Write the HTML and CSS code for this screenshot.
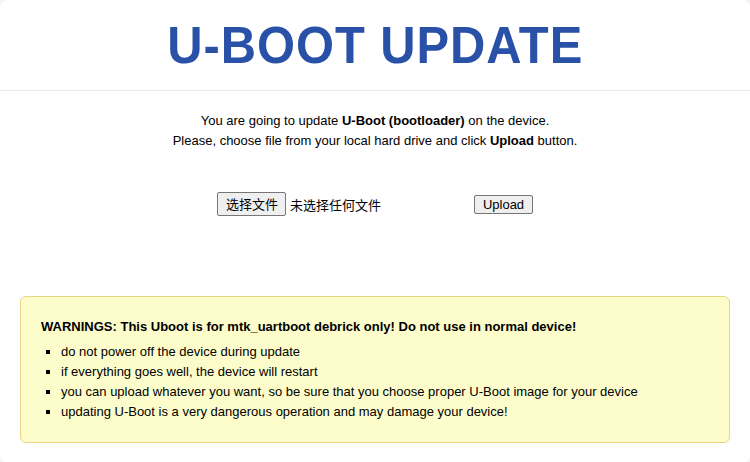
FILE: index.html
```html
<!DOCTYPE html>
<html lang="en">
<head>
  <meta charset="UTF-8">
  <meta name="viewport" content="width=device-width, initial-scale=1.0">
  <title>U-Boot update</title>
  <link rel="stylesheet" href="styles.css">
</head>
<body>
  <div class="page">
    <div class="header">
      <h1>U-BOOT UPDATE</h1>
    </div>

    <div class="content">
      <p class="intro">
        You are going to update <strong>U-Boot (bootloader)</strong> on the device.<br>
        Please, choose file from your local hard drive and click <strong>Upload</strong> button.
      </p>

      <form class="upload-form" onsubmit="return false;">
        <label class="file-field">
          <input type="file" name="firmware" id="file">
          <span class="file-btn">选择文件</span>
          <span class="file-name" id="file-name">未选择任何文件</span>
        </label>
        <button type="submit" class="upload-btn">Upload</button>
      </form>

      <div class="warning">
        <p class="warning-title">WARNINGS: This Uboot is for mtk_uartboot debrick only! Do not use in normal device!</p>
        <ul>
          <li>do not power off the device during update</li>
          <li>if everything goes well, the device will restart</li>
          <li>you can upload whatever you want, so be sure that you choose proper U-Boot image for your device</li>
          <li>updating U-Boot is a very dangerous operation and may damage your device!</li>
        </ul>
      </div>
    </div>
  </div>

  <script>
    document.getElementById('file').onchange = function() {
      const name = this.files.length ? this.files[0].name : '未选择任何文件';
      document.getElementById('file-name').textContent = name;
    };
  </script>
</body>
</html>
```

FILE: styles.css
```css
/* Base */
body {
  margin: 0;
  background: #f4f4f4;
  font-family: 'Liberation Sans', Arial, 'Noto Sans CJK SC', sans-serif;
  font-size: 13px;
  color: #000;
}

.page {
  background: #fff;
  border-radius: 8px;
  min-height: 462px;
  box-sizing: border-box;
}

/* Header */
.header {
  height: 90px;
  border-bottom: 1px solid #e8e8e8;
  display: flex;
  align-items: center;
  justify-content: center;
}

h1 {
  margin: 0;
  font-family: 'Liberation Sans', Arial, sans-serif;
  font-size: 52px;
  font-weight: bold;
  color: #2951a7;
  letter-spacing: 1px;
  transform: scaleX(0.94);
}

/* Content */
.content {
  padding: 20px 20px 20px;
}

.intro {
  margin: 0;
  text-align: center;
  line-height: 20px;
}

.upload-form {
  display: flex;
  justify-content: center;
  align-items: center;
  margin-top: 41px;
}

.file-field {
  position: relative;
  display: inline-flex;
  align-items: center;
  width: 253px;
  font-family: 'Noto Sans CJK SC', sans-serif;
}

.file-field input {
  position: absolute;
  width: 1px;
  height: 1px;
  opacity: 0;
}

.file-btn {
  display: inline-block;
  height: 24px;
  line-height: 22px;
  box-sizing: border-box;
  padding: 0 7px 0 8px;
  background: #efefef;
  border: 1px solid #767676;
  border-radius: 2px;
  margin-right: 4px;
  cursor: pointer;
}

.file-name {
  white-space: nowrap;
}

.upload-btn {
  margin-left: 4px;
  height: 19px;
  padding: 0 8px;
  font-family: 'Liberation Sans', Arial, sans-serif;
  font-size: 13px;
  background: #efefef;
  border: 1px solid #767676;
  border-radius: 2px;
  cursor: pointer;
}

/* Warning box */
.warning {
  margin-top: 80px;
  background: #fdfdcc;
  border: 1px solid #e8d583;
  border-radius: 6px;
  padding: 20px 20px 20px;
}

.warning-title {
  margin: 0 0 5px;
  font-weight: bold;
  line-height: 20px;
}

.warning ul {
  margin: 0;
  padding-left: 20px;
  list-style: square;
}

.warning li {
  line-height: 20px;
}
```
